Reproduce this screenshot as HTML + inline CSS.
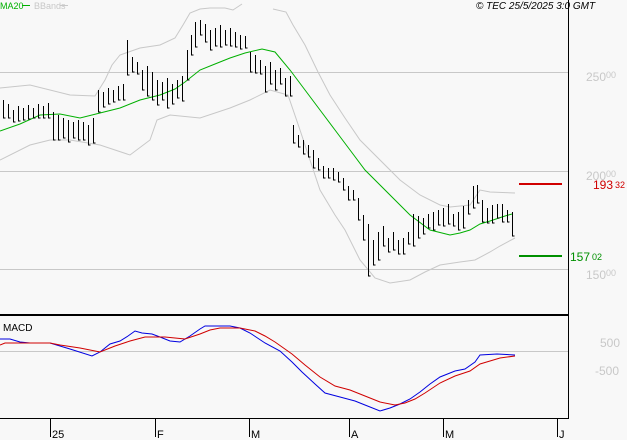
<!DOCTYPE html>
<html><head><meta charset="utf-8"><style>
html,body{margin:0;padding:0;background:#f8f8f8;}
svg{display:block;font-family:"Liberation Sans",sans-serif;}
</style></head><body>
<svg width="627" height="440" viewBox="0 0 627 440" xmlns="http://www.w3.org/2000/svg">
<rect width="627" height="440" fill="#f8f8f8"/>
<g stroke="#c8c8c8" stroke-width="1" fill="none">
<line x1="0" y1="72.5" x2="569" y2="72.5"/>
<line x1="0" y1="171.5" x2="569" y2="171.5"/>
<line x1="0" y1="269.5" x2="569" y2="269.5"/>
<line x1="0" y1="351.5" x2="569" y2="351.5"/>
<polyline points="0,88 30,85 70,95 95,96 105,80 112,65 120,55 140,48 160,45 175,38 183,25 190,13 200,9 210,8 225,8 233,10 242,4"/>
<polyline points="273,9 286,12 293,25 305,45 318,72 330,95 345,118 360,140 380,160 400,180 420,195 440,205 450,207 470,205 480,190 490,192 515,193"/>
<polyline points="0,160 30,145 50,140 70,140 100,145 130,155 150,140 157,120 170,115 200,118 230,108 250,100 270,90 288,95 300,130 320,190 335,215 345,230 360,260 375,278 390,283 410,280 425,272 440,265 460,262 475,260 490,252 500,246 515,238"/>
</g>
<polyline fill="none" stroke="#00b000" stroke-width="1" points="0,131 20,124 40,115 60,114 80,118 100,113 120,108 140,100 160,95 175,89 185,82 200,70 215,64 230,58 245,53 262,49 275,52 290,70 305,90 320,110 335,130 350,150 365,170 380,185 395,200 410,215 430,230 450,235 460,233 470,230 480,224 490,221 505,216 512,214"/>
<path fill="none" stroke="#000" stroke-width="1" d="M3.5 100v18h2M8.5 104v14h2M13.5 110v12h2M18.5 106v15h2M23.5 108v12h2M28.5 105v14h2M33.5 108v10h2M38.5 104v14h2M43.5 106v12h2M48.5 103v15h2M53.5 112v28h2M58.5 115v25h2M63.5 118v20h2M68.5 120v22h2M73.5 122v16h2M78.5 120v20h2M83.5 122v18h2M88.5 125v20h2M93.5 118v25h2M98.5 90v22h2M103.5 92v15h2M108.5 88v16h2M113.5 90v12h2M118.5 86v14h2M123.5 84v16h2M127.5 40v35h2M132.5 57v15h2M137.5 62v12h2M142.5 70v20h2M147.5 66v30h2M152.5 72v28h2M157.5 80v25h2M162.5 82v18h2M167.5 78v30h2M172.5 84v20h2M177.5 80v18h2M182.5 76v25h2M187.5 50v30h2M191.5 35v20h2M195.5 22v25h2M200.5 20v15h2M205.5 24v18h2M210.5 30v20h2M215.5 28v18h2M220.5 25v22h2M225.5 30v15h2M230.5 28v18h2M235.5 32v15h2M240.5 35v14h2M245.5 36v12h2M250.5 52v20h2M255.5 55v18h2M260.5 60v14h2M265.5 66v26h2M270.5 62v22h2M275.5 70v20h2M280.5 68v16h2M285.5 78v18h2M290.5 76v20h2M293.5 125v18h2M298.5 135v12h2M303.5 140v14h2M308.5 145v12h2M313.5 150v18h2M318.5 158v12h2M323.5 166v12h2M328.5 168v10h2M333.5 168v12h2M338.5 172v10h2M343.5 178v12h2M348.5 186v14h2M353.5 190v10h2M358.5 198v22h2M363.5 215v25h2M368.5 224v52h2M373.5 240v25h2M378.5 232v28h2M383.5 226v20h2M388.5 238v14h2M393.5 232v18h2M398.5 240v14h2M403.5 238v16h2M408.5 232v12h2M413.5 214v32h2M418.5 216v22h2M423.5 218v16h2M428.5 214v14h2M433.5 212v18h2M438.5 210v15h2M443.5 208v18h2M448.5 204v20h2M453.5 214v12h2M458.5 212v18h2M463.5 206v22h2M468.5 200v14h2M473.5 186v22h2M477.5 185v18h2M482.5 200v22h2M487.5 208v15h2M492.5 205v18h2M497.5 204v14h2M502.5 204v18h2M507.5 210v12h2M512.5 212v24h2"/>
<polyline fill="none" stroke="#0000e0" stroke-width="1" points="0,339 10,339 20,342 30,343 50,343 70,349 92,356 100,352 110,344 120,341 128,336 135,331 142,333 152,334 160,337 170,341 180,342 190,336 200,329 205,326 230,326 240,328 250,333 265,343 280,351 292,362 302,372 315,384 325,393 340,397 355,401 365,405 380,411 390,408 400,404 410,399 420,392 430,384 440,377 455,371 465,369 475,362 480,355 497,354 515,355"/>
<polyline fill="none" stroke="#d00000" stroke-width="1" points="0,345 5,343 20,343 50,343 60,345 80,348 100,352 115,346 130,341 145,337 165,337 175,338 185,339 200,334 210,330 220,328 240,328 255,331 265,336 275,342 292,354 305,365 320,377 335,386 350,390 365,396 380,402 395,405 405,403 415,399 425,393 440,383 455,376 470,371 480,364 490,361 500,358 515,356"/>
<rect x="0" y="314" width="569" height="2" fill="#000"/>
<rect x="568" y="0" width="1" height="419" fill="#000"/>
<rect x="0" y="418" width="569" height="1" fill="#000"/>
<g stroke="#000" stroke-width="1">
<line x1="50.5" y1="419" x2="50.5" y2="437"/>
<line x1="155.5" y1="419" x2="155.5" y2="437"/>
<line x1="249.5" y1="419" x2="249.5" y2="437"/>
<line x1="349.5" y1="419" x2="349.5" y2="437"/>
<line x1="443.5" y1="419" x2="443.5" y2="437"/>
<line x1="557.5" y1="419" x2="557.5" y2="437"/>
</g>
<g font-size="11" fill="#000">
<text x="52" y="438">25</text>
<text x="157" y="438">F</text>
<text x="251" y="438">M</text>
<text x="351" y="438">A</text>
<text x="445" y="438">M</text>
<text x="559" y="438">J</text>
<text x="3" y="331" font-size="10">MACD</text>
</g>
<g fill="#c8c8c8" font-size="12">
<text x="586" y="81">250<tspan font-size="9" dy="-3">00</tspan></text>
<text x="586" y="180">200<tspan font-size="9" dy="-3">00</tspan></text>
<text x="586" y="279">150<tspan font-size="9" dy="-3">00</tspan></text>
<text x="600" y="347">500</text>
<text x="595" y="375">-500</text>
</g>
<rect x="519" y="183" width="43" height="2" fill="#d00000"/>
<text x="593" y="189" fill="#d00000" font-size="12">193<tspan font-size="9" dx="2" dy="-1">32</tspan></text>
<rect x="519" y="255" width="43" height="2" fill="#009000"/>
<text x="570" y="261" fill="#009000" font-size="12">157<tspan font-size="9" dx="2" dy="-1">02</tspan></text>
<text x="0" y="9" fill="#00b000" font-size="9">MA20</text>
<rect x="22" y="5" width="8" height="1" fill="#00b000"/>
<text x="34" y="9" fill="#c8c8c8" font-size="9">BBands</text>
<rect x="60" y="5" width="8" height="1" fill="#c8c8c8"/>
<text x="476" y="9" fill="#000" font-size="10" font-style="italic">© TEC 25/5/2025 3:0 GMT</text>
</svg>
</body></html>
